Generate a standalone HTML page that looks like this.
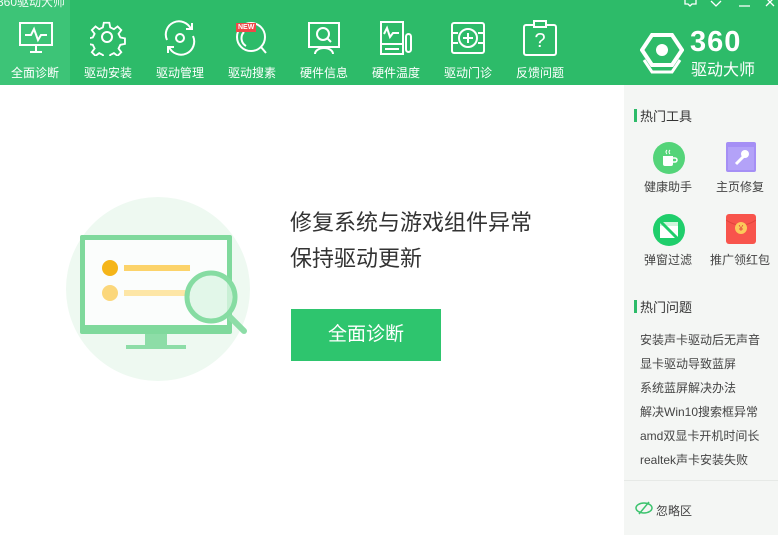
<!DOCTYPE html><html><head><meta charset="utf-8"><style>
body{margin:0;width:778px;height:535px;overflow:hidden;background:#fff;font-family:"Liberation Sans","Noto Sans CJK SC",sans-serif;position:relative}
.hd{position:absolute;left:0;top:0;width:778px;height:85px;background:#2dbb69}
.nav{position:absolute;top:0;width:72px;height:85px;text-align:center;color:#fff;font-size:12px}
.nav svg{position:absolute;left:18px;top:20px}
.nav span{position:absolute;left:0;right:0;top:64px}
.sel{background:#3dc477}
.sb{position:absolute;left:624px;top:85px;width:154px;height:450px;background:#f4f6f4}
.t{position:absolute;font-size:13px;color:#333}
.bar{position:absolute;width:3px;height:13px;background:#2dbb69}
.q{position:absolute;left:16px;font-size:12px;color:#444;white-space:nowrap}
.tl{position:absolute;font-size:12px;color:#444;width:70px;text-align:center}
</style></head><body>
<div class="hd">
<div style="position:absolute;left:-3px;top:-5px;color:#f0fbf4;font-size:12px;line-height:14px;z-index:2">360驱动大师</div>
<svg style="position:absolute;left:684px;top:0" width="94" height="10" fill="none" stroke="#fff" stroke-width="1.3"><path d="M1 -2v6h3l2 2 2-2h4v-6M27 1l5 5 5-5M55 6h11M82 -2l8 8M90 -2l-8 8"/></svg>
<div class="nav sel" style="left:0;width:70px"><svg width="36" height="36" viewBox="0 0 36 36" fill="none" stroke="#fff" stroke-width="2"><rect x="2" y="3" width="32" height="22"/><path d="M7 15h6l3-6 4 11 3-5h6M12 32h12M18 25v7"/></svg><span>全面诊断</span></div>
<div class="nav" style="left:72px"><svg width="36" height="36" viewBox="0 0 36 36" fill="none" stroke="#fff" stroke-width="2"><path d="M15 3h6l1 5 4 2 4-3 4 4-3 4 2 4 5 1v6l-5 1-2 4 3 4-4 4-4-3-4 2-1 5h-6l-1-5-4-2-4 3-4-4 3-4-2-4-5-1v-6l5-1 2-4-3-4 4-4 4 3 4-2z" transform="scale(.92)"/><circle cx="17" cy="17" r="5"/></svg><span>驱动安装</span></div>
<div class="nav" style="left:144px"><svg width="36" height="36" viewBox="0 0 36 36" fill="none" stroke="#fff" stroke-width="2"><path d="M5 20A13 13 0 0 1 29 9M31 16A13 13 0 0 1 7 27"/><path d="M24 9h6V3M12 27H6v6"/><circle cx="18" cy="18" r="4"/></svg><span>驱动管理</span></div>
<div class="nav" style="left:216px"><svg width="36" height="36" viewBox="0 0 36 36" fill="none" stroke="#fff" stroke-width="2"><circle cx="17" cy="17" r="14"/><path d="M10 12a9 9 0 0 0 2 14M27 27l5 6"/></svg><div style="position:absolute;left:20px;top:23px;background:#f04848;color:#fff;font-size:7px;font-weight:bold;padding:0 2px;line-height:9px">NEW</div><span>驱动搜素</span></div>
<div class="nav" style="left:288px"><svg width="36" height="36" viewBox="0 0 36 36" fill="none" stroke="#fff" stroke-width="2"><rect x="3" y="3" width="30" height="24"/><circle cx="17" cy="14" r="6"/><path d="M21 18l4 4M9 34a9 6 0 0 1 18 0"/></svg><span>硬件信息</span></div>
<div class="nav" style="left:360px"><svg width="36" height="36" viewBox="0 0 36 36" fill="none" stroke="#fff" stroke-width="2"><rect x="3" y="2" width="22" height="32"/><path d="M6 14l3-6 3 9 3-4h6M3 24h22M7 29h14"/><rect x="28" y="14" width="5" height="18" rx="2.5"/></svg><span>硬件温度</span></div>
<div class="nav" style="left:432px"><svg width="36" height="36" viewBox="0 0 36 36" fill="none" stroke="#fff" stroke-width="2"><rect x="2" y="3" width="32" height="30" rx="2"/><path d="M2 13h6M2 23h6M28 13h6M28 23h6M18 13v10M13 18h10"/><circle cx="18" cy="18" r="9"/></svg><span>驱动门诊</span></div>
<div class="nav" style="left:504px"><svg width="36" height="36" viewBox="0 0 36 36" fill="none" stroke="#fff" stroke-width="2"><rect x="2" y="5" width="32" height="30" rx="2"/><rect x="12" y="1" width="12" height="6" fill="#2dbb69"/></svg><div style="position:absolute;left:0;right:0;top:30px;font-size:20px">?</div><span>反馈问题</span></div>
<svg style="position:absolute;left:640px;top:32px" width="44" height="42" viewBox="0 0 44 42" fill="none" stroke="#fff" stroke-width="4"><path d="M12 3h20l10 15-10 15H12L2 18z"/><path d="M4 28l8 12h20l8-12" stroke-width="3"/><circle cx="22" cy="18" r="6" fill="#fff" stroke="none"/></svg>
<div style="position:absolute;left:690px;top:26px;color:#fff;font-size:29px;font-weight:bold;letter-spacing:1px">360</div>
<div style="position:absolute;left:691px;top:56px;color:#fff;font-size:16px">驱动大师</div>
</div>
<svg style="position:absolute;left:66px;top:197px" width="186" height="186"><circle cx="92" cy="92" r="92" fill="#eef9f1"/><rect x="14" y="38" width="152" height="99" rx="2" fill="#7fd99c"/><rect x="19" y="43" width="142" height="85" fill="#fbfdfc"/><rect x="79" y="137" width="22" height="12" fill="#8ddda7"/><rect x="60" y="148" width="60" height="4" fill="#8ddda7"/><circle cx="44" cy="71" r="8" fill="#f5b518"/><rect x="58" y="68" width="66" height="6" fill="#fcd36a"/><circle cx="44" cy="96" r="8" fill="#fbd77b"/><rect x="58" y="93" width="66" height="6" fill="#fde6a6"/><path d="M164 120l14 14" stroke="#8ddda7" stroke-width="6" stroke-linecap="round"/><circle cx="145" cy="100" r="24" fill="#dcf5e4" fill-opacity=".8" stroke="#86dca2" stroke-width="5"/></svg>
<div style="position:absolute;left:290px;top:205px;font-size:22px;color:#333;line-height:36px">修复系统与游戏组件异常<br>保持驱动更新</div>
<div style="position:absolute;left:291px;top:309px;width:150px;height:52px;background:#2ec56e;color:#fff;font-size:19px;text-align:center;line-height:52px">全面诊断</div>
<div class="sb">
<div class="bar" style="left:10px;top:24px"></div><div class="t" style="left:16px;top:21px">热门工具</div>
<svg style="position:absolute;left:29px;top:57px" width="32" height="32"><circle cx="16" cy="16" r="16" fill="#54d479"/><path d="M10 14h10v8a2 2 0 0 1-2 2h-6a2 2 0 0 1-2-2z" fill="#fff"/><path d="M20 16h2a2 2 0 0 1 0 4h-2" stroke="#fff" fill="none" stroke-width="1.5"/><path d="M14 8q-2 2 0 4M17 8q-2 2 0 4" stroke="#fff" fill="none"/></svg>
<svg style="position:absolute;left:102px;top:57px" width="30" height="30"><rect width="30" height="30" rx="2" fill="#a58ff5"/><rect x="2" y="5" width="26" height="23" fill="#b3a2f8"/><path d="M10 22l8-8" stroke="#fff" stroke-width="3"/><circle cx="19" cy="12" r="4" fill="#fff"/></svg>
<div class="tl" style="left:9px;top:93px">健康助手</div><div class="tl" style="left:81px;top:93px">主页修复</div>
<svg style="position:absolute;left:29px;top:129px" width="32" height="32"><circle cx="16" cy="16" r="16" fill="#1fce6b"/><rect x="7" y="8" width="18" height="16" fill="#fff"/><rect x="7" y="8" width="18" height="4" fill="#cff5dc"/><path d="M5 5l22 22" stroke="#1fce6b" stroke-width="3"/></svg>
<svg style="position:absolute;left:102px;top:129px" width="30" height="30"><rect width="30" height="30" rx="3" fill="#f8544c"/><path d="M0 6q15 10 30 0" stroke="#e0443c" fill="none"/><circle cx="15" cy="14" r="6" fill="#fcc95a"/><text x="15" y="17" font-size="8" text-anchor="middle" fill="#e0443c">¥</text></svg>
<div class="tl" style="left:9px;top:166px">弹窗过滤</div><div class="tl" style="left:81px;top:166px">推广领红包</div>
<div class="bar" style="left:10px;top:215px"></div><div class="t" style="left:16px;top:212px">热门问题</div>
<div class="q" style="top:246px">安装声卡驱动后无声音</div>
<div class="q" style="top:270px">显卡驱动导致蓝屏</div>
<div class="q" style="top:294px">系统蓝屏解决办法</div>
<div class="q" style="top:318px">解决Win10搜索框异常</div>
<div class="q" style="top:342px">amd双显卡开机时间长</div>
<div class="q" style="top:366px">realtek声卡安装失败</div>
<div style="position:absolute;left:0;top:395px;width:154px;height:1px;background:#e6e9e6"></div>
<svg style="position:absolute;left:11px;top:416px" width="18" height="14" fill="none" stroke="#3cc36e" stroke-width="1.5"><ellipse cx="9" cy="7" rx="8" ry="5"/><path d="M14 1L4 13"/></svg>
<div class="q" style="left:32px;top:417px">忽略区</div>
</div>
</body></html>
